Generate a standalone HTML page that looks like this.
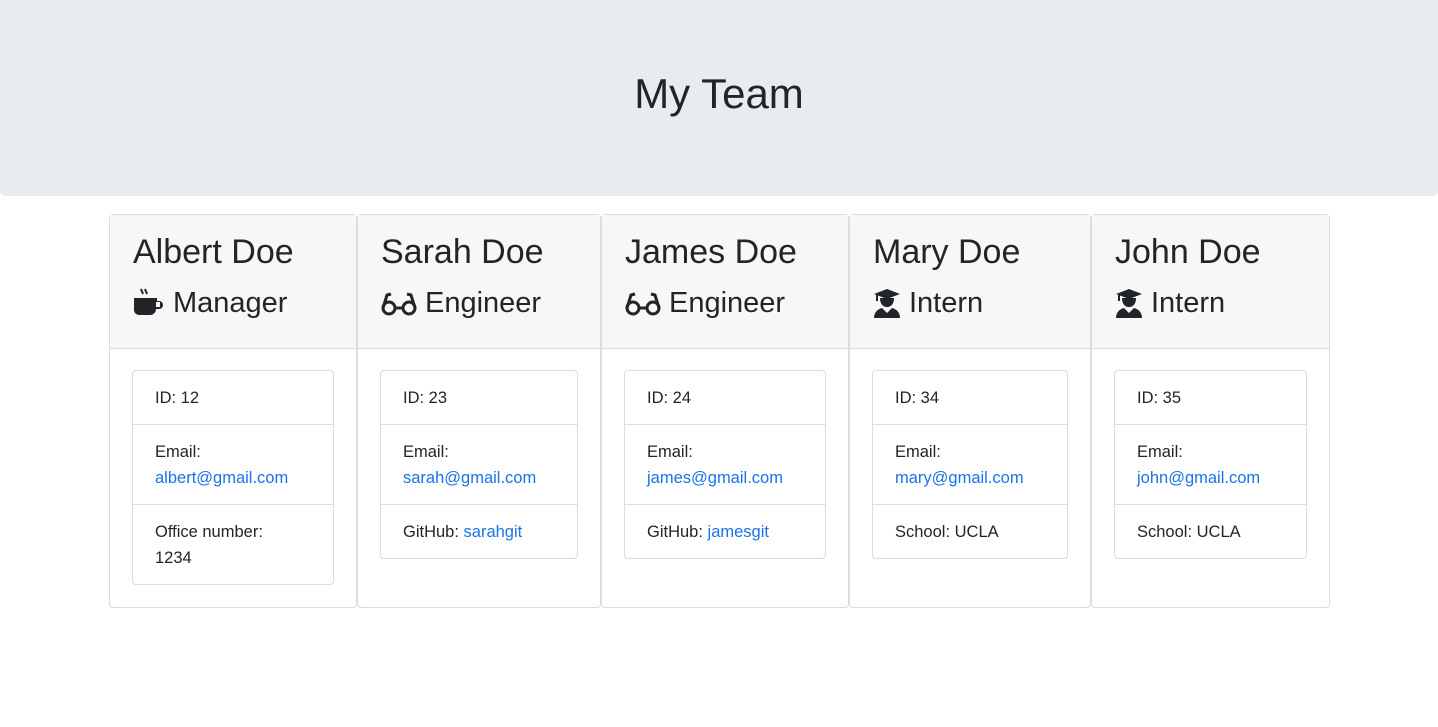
<!DOCTYPE html>
<html><head><meta charset="utf-8"><style>
*{box-sizing:border-box;margin:0;padding:0}
body{width:1438px;height:727px;background:#fff;font-family:"Liberation Sans",sans-serif;color:#212529;overflow:hidden}
.jumbo{height:196px;background:#e9ecef;border-radius:0 0 5px 5px;display:flex;align-items:center;justify-content:center}
.jumbo h1{font-size:42px;font-weight:500;margin-top:-8px}
.row{position:absolute;top:214px;left:109px;display:flex}
.card{border:1px solid #dcdcdc;border-radius:4px;height:394px;background:#fff}
.ch{background:#f7f7f7;border-bottom:1px solid #dcdcdc;height:134px;padding:16px 23px 0}
.ch h2{font-size:34px;font-weight:500;line-height:42px}
.ch h3{font-size:29px;font-weight:500;line-height:36px;margin-top:12px;display:flex;align-items:center}
.ch svg{margin-right:8px}
.cb{padding:21px 22px}
ul{list-style:none;border:1px solid #dcdcdc;border-radius:4px}
li{padding:14px 22px 13px;font-size:16.5px;line-height:26px;border-top:1px solid #dcdcdc}
li:first-child{border-top:none}
a{color:#1a73e8;text-decoration:none}
</style></head><body>
<div class="jumbo"><h1>My Team</h1></div>
<div class="row">
<div class="card" style="width:248px"><div class="ch"><h2>Albert Doe</h2><h3><svg width="32" height="32" viewBox="0 0 32 32"><path d="M8 2l2 5M12 2l2 5" stroke="#212529" stroke-width="2"/><path d="M1 11h23v3h2a4 4 0 010 8h-3a6 6 0 01-6 6H6a5 5 0 01-5-5z" fill="#212529"/><rect x="23" y="15" width="4" height="5" fill="#f7f7f7"/></svg>Manager</h3></div>
<div class="cb"><ul><li>ID: 12</li><li>Email:<br><a>albert@gmail.com</a></li><li>Office number:<br>1234</li></ul></div></div>
<div class="card" style="width:244px"><div class="ch"><h2>Sarah Doe</h2><h3><svg width="36" height="30" viewBox="0 0 36 30"><g fill="none" stroke="#212529" stroke-width="3"><circle cx="8" cy="20" r="6"/><circle cx="28" cy="20" r="6"/><path d="M14 20h8M2 20l4-13 4-1M34 20l-4-13-4-1"/></g></svg>Engineer</h3></div>
<div class="cb"><ul><li>ID: 23</li><li>Email:<br><a>sarah@gmail.com</a></li><li>GitHub: <a>sarahgit</a></li></ul></div></div>
<div class="card" style="width:248px"><div class="ch"><h2>James Doe</h2><h3><svg width="36" height="30" viewBox="0 0 36 30"><g fill="none" stroke="#212529" stroke-width="3"><circle cx="8" cy="20" r="6"/><circle cx="28" cy="20" r="6"/><path d="M14 20h8M2 20l4-13 4-1M34 20l-4-13-4-1"/></g></svg>Engineer</h3></div>
<div class="cb"><ul><li>ID: 24</li><li>Email:<br><a>james@gmail.com</a></li><li>GitHub: <a>jamesgit</a></li></ul></div></div>
<div class="card" style="width:242px"><div class="ch"><h2>Mary Doe</h2><h3><svg width="28" height="30" viewBox="0 0 28 30"><path d="M14 1l13 5-13 5L1 6z" fill="#212529"/><path d="M4 7v6" stroke="#212529" stroke-width="2"/><path d="M7 10c0 6 3 9 7 9s7-3 7-9" fill="#212529"/><path d="M1 30c0-6 4-9 8-10l5 5 5-5c4 1 8 4 8 10z" fill="#212529"/></svg>Intern</h3></div>
<div class="cb"><ul><li>ID: 34</li><li>Email:<br><a>mary@gmail.com</a></li><li>School: UCLA</li></ul></div></div>
<div class="card" style="width:239px"><div class="ch"><h2>John Doe</h2><h3><svg width="28" height="30" viewBox="0 0 28 30"><path d="M14 1l13 5-13 5L1 6z" fill="#212529"/><path d="M4 7v6" stroke="#212529" stroke-width="2"/><path d="M7 10c0 6 3 9 7 9s7-3 7-9" fill="#212529"/><path d="M1 30c0-6 4-9 8-10l5 5 5-5c4 1 8 4 8 10z" fill="#212529"/></svg>Intern</h3></div>
<div class="cb"><ul><li>ID: 35</li><li>Email:<br><a>john@gmail.com</a></li><li>School: UCLA</li></ul></div></div>
</div>
</body></html>
